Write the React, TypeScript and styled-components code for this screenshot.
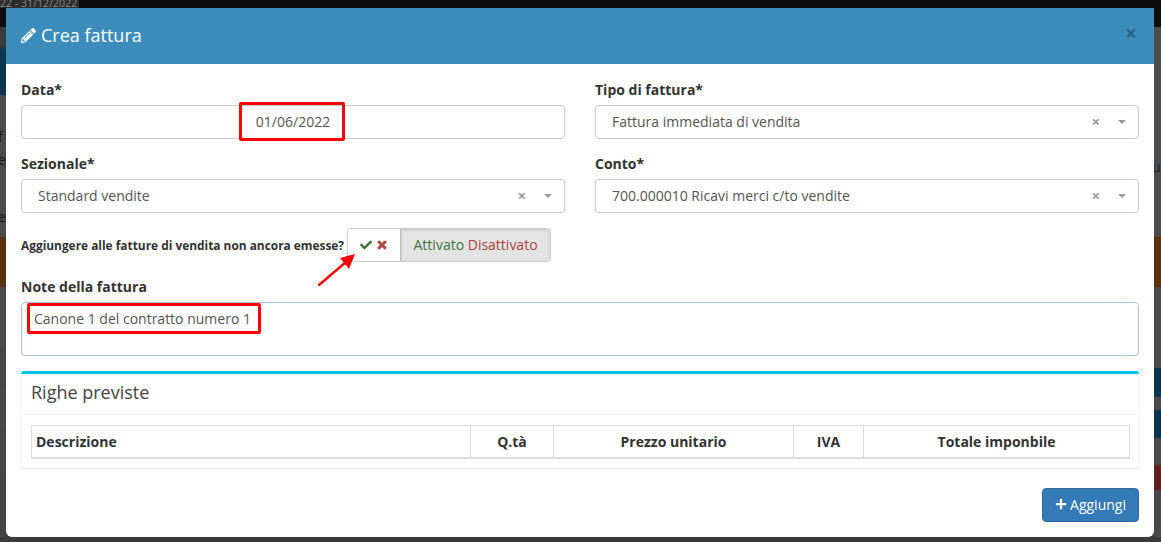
import React, { FC } from "react"
import styled, { createGlobalStyle } from "styled-components"
import { FaCheck, FaPencilAlt, FaPlus, FaTimes } from "react-icons/fa"

const GlobalStyle = createGlobalStyle`
  html, body {
    margin: 0;
    padding: 0;
    background: #3a3a3a;
  }
  * {
    box-sizing: border-box;
  }
`

interface BandData {
  h: number
  color: string
  text?: string
}

const LEFT_BANDS: BandData[] = [
  { h: 19, color: "#0d0d0d" },
  { h: 20, color: "#3b3b3b" },
  { h: 3, color: "#123a55" },
  { h: 45, color: "#0e3550" },
  { h: 32, color: "#4b4b4b" },
  { h: 20, color: "#4b4b4b", text: "f" },
  { h: 3, color: "#4b4b4b" },
  { h: 20, color: "#4b4b4b", text: "e" },
  { h: 37, color: "#4b4b4b" },
  { h: 20, color: "#4b4b4b", text: "e" },
  { h: 10, color: "#4b4b4b" },
  { h: 50, color: "#5a3210" },
  { h: 60, color: "#4a4a4a" },
  { h: 41, color: "#474747" },
  { h: 41, color: "#484848" },
  { h: 41, color: "#474747" },
  { h: 67, color: "#454545" },
]

const RIGHT_BANDS: BandData[] = [
  { h: 19, color: "#0d0d0d" },
  { h: 130, color: "#4b4b4b" },
  { h: 20, color: "#4b4b4b", text: "u" },
  { h: 60, color: "#4b4b4b" },
  { h: 50, color: "#5a3210" },
  { h: 81, color: "#4a4a4a" },
  { h: 29, color: "#0e3550" },
  { h: 13, color: "#4a4a4a" },
  { h: 28, color: "#0e3550" },
  { h: 27, color: "#4a4a4a" },
  { h: 25, color: "#5f2020" },
  { h: 47, color: "#484848" },
]

const COLUMNS = [
  { label: "Descrizione", width: 439, left: true },
  { label: "Q.tà", width: 83 },
  { label: "Prezzo unitario", width: 240 },
  { label: "IVA", width: 70 },
  { label: "Totale imponbile", width: 266 },
]

const Select: FC<{ value: string }> = ({ value }) => (
  <SelectBox>
    <SelectValue>{value}</SelectValue>
    <SelectClear>×</SelectClear>
    <SelectArrow />
  </SelectBox>
)

const App: FC = () => (
  <>
    <GlobalStyle />
    <Page>
      <TopBar>
        <DateChip>22 - 31/12/2022</DateChip>
      </TopBar>
      <Middle>
        <Strip $width={6} $align="flex-end">
          {LEFT_BANDS.map((b, i) => (
            <Band key={i} $h={b.h} $color={b.color}>
              {b.text}
            </Band>
          ))}
        </Strip>

        <Modal>
          <ModalHeader>
            <ModalTitle>
              <FaPencilAlt size={15} />
              Crea fattura
            </ModalTitle>
            <CloseMark>×</CloseMark>
          </ModalHeader>

          <ModalBody>
            <FormGrid>
              <Field>
                <Label>Data*</Label>
                <DateInput>
                  01/06/2022
                  <DateHighlight />
                </DateInput>
              </Field>
              <Field>
                <Label>Tipo di fattura*</Label>
                <Select value="Fattura immediata di vendita" />
              </Field>
              <Field>
                <Label>Sezionale*</Label>
                <Select value="Standard vendite" />
              </Field>
              <Field>
                <Label>Conto*</Label>
                <Select value="700.000010 Ricavi merci c/to vendite" />
              </Field>
            </FormGrid>

            <SwitchRow>
              <SwitchLabel>Aggiungere alle fatture di vendita non ancora emesse?</SwitchLabel>
              <Switch>
                <SwitchIcons>
                  <CheckIcon size={12} />
                  <CrossIcon size={12} />
                </SwitchIcons>
                <SwitchText>
                  <On>Attivato</On> <Off>Disattivato</Off>
                </SwitchText>
              </Switch>
              <Arrow width="44" height="40" viewBox="0 0 44 40">
                <line x1="3" y1="37" x2="30" y2="14" stroke="#f00" strokeWidth="2.4" strokeLinecap="round" />
                <polygon points="39,6 33,21 24,10" fill="#f00" />
              </Arrow>
            </SwitchRow>

            <Label>Note della fattura</Label>
            <NoteArea>
              Canone 1 del contratto numero 1
              <NoteHighlight />
            </NoteArea>

            <Box>
              <BoxHeader>Righe previste</BoxHeader>
              <BoxBody>
                <Table>
                  <colgroup>
                    {COLUMNS.map((c) => (
                      <col key={c.label} width={c.width} />
                    ))}
                  </colgroup>
                  <thead>
                    <tr>
                      {COLUMNS.map((c) => (
                        <Th key={c.label} $left={c.left}>
                          {c.label}
                        </Th>
                      ))}
                    </tr>
                  </thead>
                </Table>
              </BoxBody>
            </Box>

            <Footer>
              <AddButton>
                <FaPlus size={12} />
                <span>Aggiungi</span>
              </AddButton>
            </Footer>
          </ModalBody>
        </Modal>

        <Strip $width={7} $align="flex-start">
          {RIGHT_BANDS.map((b, i) => (
            <Band key={i} $h={b.h} $color={b.color}>
              {b.text}
            </Band>
          ))}
        </Strip>
      </Middle>
      <BottomBar />
    </Page>
  </>
)

const Page = styled.div`
  width: 1161px;
  height: 542px;
  overflow: hidden;
  display: flex;
  flex-direction: column;
  font-family: "Open Sans", sans-serif;
  font-size: 14px;
  color: #333;
  background: #3a3a3a;
`

const TopBar = styled.div`
  height: 8px;
  flex: none;
  background: #0d0d0d;
  overflow: hidden;
`

const DateChip = styled.div`
  width: 79px;
  height: 8px;
  background: #2b2b2b;
  color: #8a8a8a;
  font-size: 10.6px;
  line-height: 0;
  padding-top: 3px;
  white-space: nowrap;
  overflow: hidden;
`

const Middle = styled.div`
  display: flex;
  height: 529px;
  flex: none;
`

const BottomBar = styled.div`
  flex: 1;
  background: #3a3a3a;
`

const Strip = styled.div<{ $width: number; $align: string }>`
  width: ${(p) => p.$width}px;
  flex: none;
  display: flex;
  flex-direction: column;
  align-items: ${(p) => p.$align};
  overflow: hidden;
`

const Band = styled.div<{ $h: number; $color: string }>`
  width: 100%;
  height: ${(p) => p.$h}px;
  flex: none;
  background: ${(p) => p.$color};
  color: #1c1c1c;
  font-size: 14px;
  line-height: ${(p) => p.$h}px;
  text-indent: -2px;
  white-space: nowrap;
`

const Modal = styled.div`
  width: 1148px;
  flex: none;
  display: flex;
  flex-direction: column;
  background: #fff;
  border-radius: 0 0 6px 6px;
`

const ModalHeader = styled.div`
  height: 56px;
  flex: none;
  display: flex;
  align-items: center;
  justify-content: space-between;
  padding: 0 17px 2px 15px;
  background: #3c8dbc;
  color: #fff;
`

const ModalTitle = styled.div`
  display: flex;
  align-items: center;
  gap: 5px;
  font-size: 18px;
  line-height: 26px;
`

const CloseMark = styled.div`
  font-size: 21px;
  font-weight: 700;
  line-height: 1;
  color: #2a6286;
  margin: -4px 0 0;
`

const ModalBody = styled.div`
  flex: 1;
  padding: 16px 15px 0;
`

const FormGrid = styled.div`
  display: grid;
  grid-template-columns: 544px 544px;
  column-gap: 30px;
  row-gap: 15px;
`

const Field = styled.div`
  display: flex;
  flex-direction: column;
`

const Label = styled.div`
  height: 20px;
  margin-bottom: 5px;
  font-weight: 700;
  font-size: 14px;
  line-height: 20px;
  color: #333;
`

const DateInput = styled.div`
  position: relative;
  height: 34px;
  border: 1px solid #ccc;
  border-radius: 4px;
  text-align: center;
  line-height: 32px;
  font-size: 14px;
  color: #555;
`

const DateHighlight = styled.div`
  position: absolute;
  left: 217px;
  top: -4px;
  width: 106px;
  height: 39px;
  border: 3px solid #f00;
  border-radius: 2px;
`

const SelectBox = styled.div`
  height: 34px;
  display: flex;
  align-items: center;
  border: 1px solid #ccc;
  border-radius: 4px;
  padding: 0 12px 2px 16px;
  font-size: 14px;
  color: #555;
`

const SelectValue = styled.div`
  flex: 1;
  white-space: nowrap;
`

const SelectClear = styled.div`
  color: #999;
  font-size: 15px;
  font-weight: 700;
  line-height: 1;
  margin-right: 18px;
`

const SelectArrow = styled.div`
  width: 0;
  height: 0;
  margin-top: 2px;
  border-left: 4px solid transparent;
  border-right: 4px solid transparent;
  border-top: 4px solid #999;
`

const SwitchRow = styled.div`
  position: relative;
  display: flex;
  align-items: center;
  gap: 3px;
  height: 34px;
  margin: 15px 0 15px;
`

const SwitchLabel = styled.div`
  font-size: 11.9px;
  font-weight: 700;
  color: #333;
  white-space: nowrap;
`

const Switch = styled.div`
  width: 204px;
  height: 34px;
  display: flex;
  border: 1px solid #ccc;
  border-radius: 4px;
  overflow: hidden;
`

const SwitchIcons = styled.div`
  width: 53px;
  flex: none;
  display: flex;
  align-items: center;
  justify-content: center;
  gap: 4px;
  background: #fff;
  border-right: 1px solid #bbb;
`

const CheckIcon = styled(FaCheck)`
  color: #3c763d;
`

const CrossIcon = styled(FaTimes)`
  color: #a94442;
  stroke: #a94442;
  stroke-width: 40px;
`

const SwitchText = styled.div`
  flex: 1;
  background: #e4e4e4;
  box-shadow: inset 0 1px 3px rgba(0, 0, 0, 0.15);
  text-align: center;
  line-height: 32px;
  font-size: 14px;
  white-space: nowrap;
`

const On = styled.span`
  color: #3c763d;
`

const Off = styled.span`
  color: #a94442;
`

const Arrow = styled.svg`
  position: absolute;
  left: 295px;
  top: 20px;
  overflow: visible;
`

const NoteArea = styled.div`
  position: relative;
  height: 54px;
  border: 1px solid #a9c1db;
  border-radius: 4px;
  padding: 6px 12px;
  font-size: 14px;
  line-height: 20px;
  color: #555;
`

const NoteHighlight = styled.div`
  position: absolute;
  left: 5px;
  top: 0;
  width: 234px;
  height: 31px;
  border: 3px solid #f00;
  border-radius: 2px;
`

const Box = styled.div`
  height: 97px;
  margin-top: 15px;
  border-top: 3px solid #00c0ef;
  border-radius: 3px;
  background: #fff;
  box-shadow: 0 1px 2px rgba(0, 0, 0, 0.12);
`

const BoxHeader = styled.div`
  height: 41px;
  padding: 0 10px;
  border-bottom: 1px solid #f4f4f4;
  font-size: 18px;
  line-height: 37px;
  color: #444;
`

const BoxBody = styled.div`
  padding: 10px;
`

const Table = styled.table`
  width: 1097px;
  border-collapse: collapse;
  table-layout: fixed;
`

const Th = styled.th<{ $left?: boolean }>`
  height: 32px;
  padding: 0 4px;
  border: 1px solid #ddd;
  border-bottom-width: 2px;
  text-align: ${(p) => (p.$left ? "left" : "center")};
  font-size: 14px;
  font-weight: 700;
  color: #333;
`

const Footer = styled.div`
  display: flex;
  justify-content: flex-end;
  margin-top: 20px;
`

const AddButton = styled.div`
  width: 97px;
  height: 34px;
  display: flex;
  align-items: center;
  justify-content: center;
  gap: 3px;
  padding-bottom: 2px;
  background: #337ab7;
  border: 1px solid #2e6da4;
  border-radius: 4px;
  color: #fff;
  font-size: 14px;
`

export default App
